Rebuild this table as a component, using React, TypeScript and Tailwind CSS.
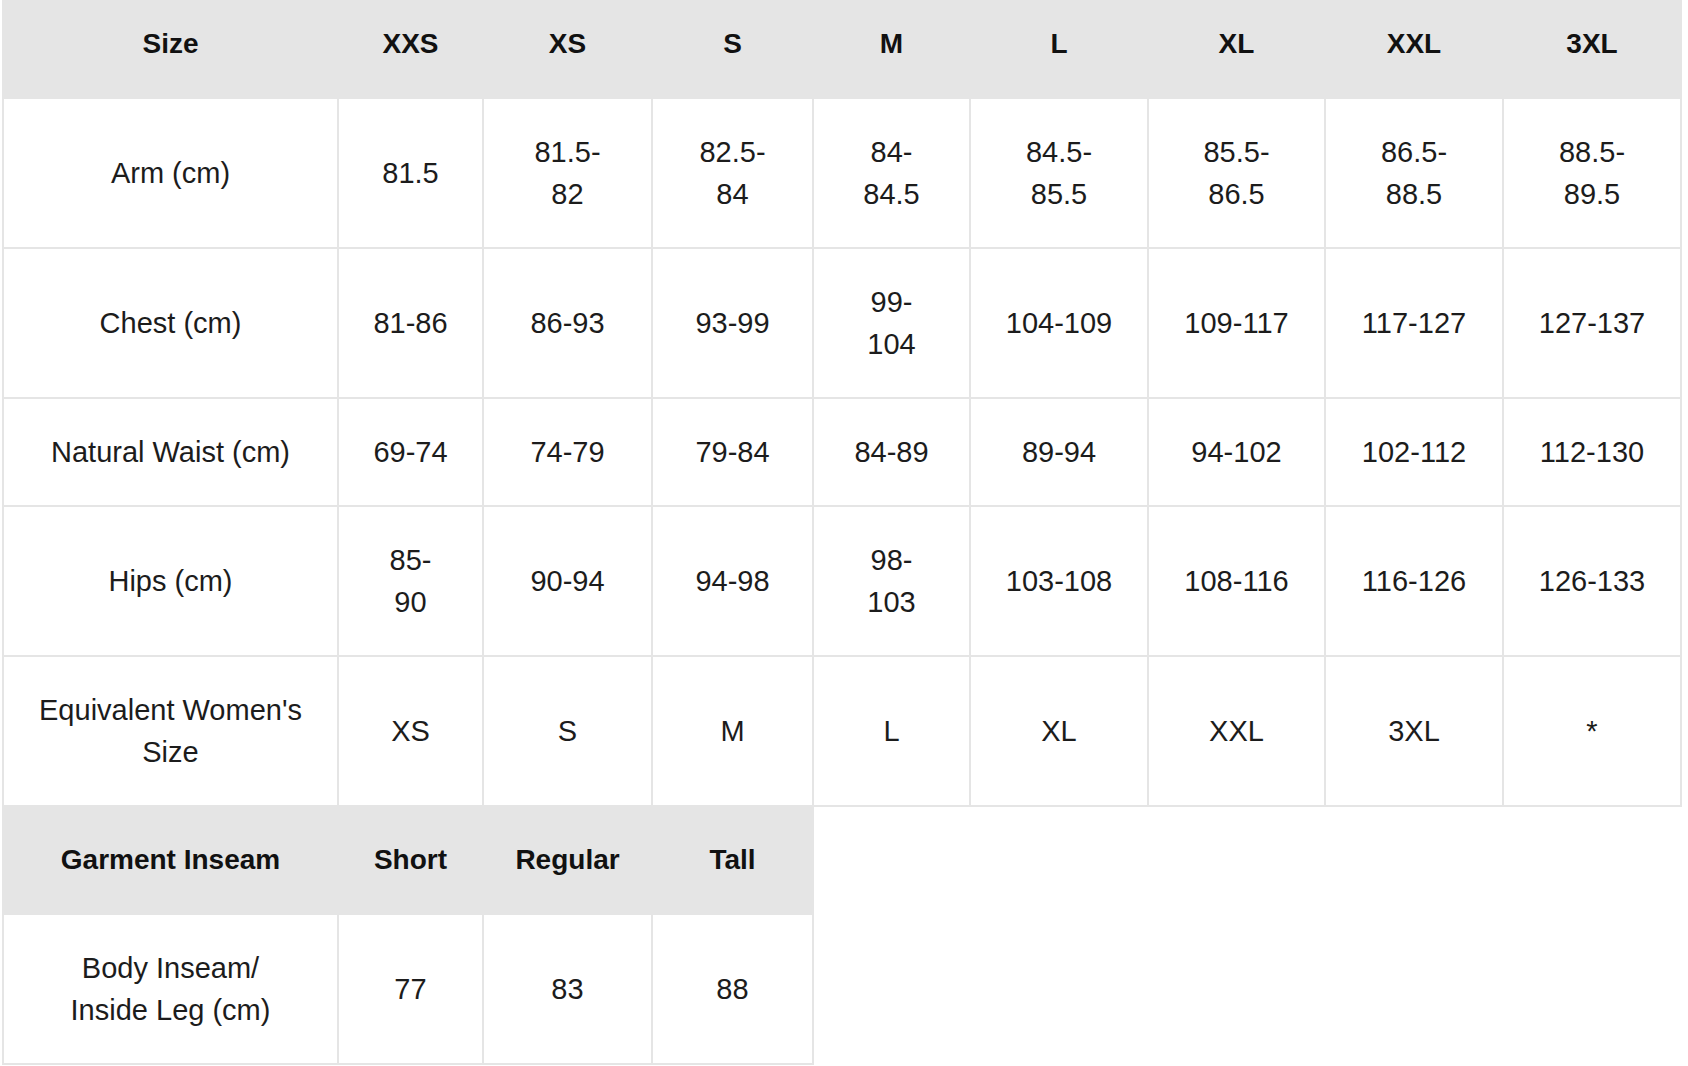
import React from "react";

const sizes = ["XXS", "XS", "S", "M", "L", "XL", "XXL", "3XL"];

const rows: { label: React.ReactNode; values: React.ReactNode[] }[] = [
  {
    label: "Arm (cm)",
    values: [
      "81.5",
      <>81.5-<br />82</>,
      <>82.5-<br />84</>,
      <>84-<br />84.5</>,
      <>84.5-<br />85.5</>,
      <>85.5-<br />86.5</>,
      <>86.5-<br />88.5</>,
      <>88.5-<br />89.5</>,
    ],
  },
  {
    label: "Chest (cm)",
    values: ["81-86", "86-93", "93-99", <>99-<br />104</>, "104-109", "109-117", "117-127", "127-137"],
  },
  {
    label: "Natural Waist (cm)",
    values: ["69-74", "74-79", "79-84", "84-89", "89-94", "94-102", "102-112", "112-130"],
  },
  {
    label: "Hips (cm)",
    values: [<>85-<br />90</>, "90-94", "94-98", <>98-<br />103</>, "103-108", "108-116", "116-126", "126-133"],
  },
  {
    label: <>Equivalent Women's<br />Size</>,
    values: ["XS", "S", "M", "L", "XL", "XXL", "3XL", "*"],
  },
];

const colWidths = [335, 145, 169, 161, 157, 178, 177, 178, 178];

const th = "bg-[#e5e5e5] border-2 border-[#e5e5e5] py-[32px] px-2 text-center font-bold text-[28px] leading-[42px] text-[#111111]";
const td = "border-2 border-[#e5e5e5] py-[32px] px-2 text-center text-[29px] leading-[42px] text-[#1c1c1c]";

export default function App() {
  return (
    <div className="min-h-screen bg-white overflow-hidden" style={{ fontFamily: '"Liberation Sans", Arial, sans-serif' }}>
      <table className="ml-[2px] mt-[-11px] w-[1680px] table-fixed border-collapse">
        <colgroup>
          {colWidths.map((w, i) => (
            <col key={i} style={{ width: w }} />
          ))}
        </colgroup>
        <thead>
          <tr>
            <th className={th}>Size</th>
            {sizes.map((s) => (
              <th key={s} className={th}>
                {s}
              </th>
            ))}
          </tr>
        </thead>
        <tbody>
          {rows.map((r, i) => (
            <tr key={i}>
              <td className={td}>{r.label}</td>
              {r.values.map((v, j) => (
                <td key={j} className={td}>
                  {v}
                </td>
              ))}
            </tr>
          ))}
          <tr>
            <th className={th}>Garment Inseam</th>
            <th className={th}>Short</th>
            <th className={th}>Regular</th>
            <th className={th}>Tall</th>
          </tr>
          <tr>
            <td className={td}>
              Body Inseam/
              <br />
              Inside Leg (cm)
            </td>
            <td className={td}>77</td>
            <td className={td}>83</td>
            <td className={td}>88</td>
          </tr>
        </tbody>
      </table>
    </div>
  );
}
